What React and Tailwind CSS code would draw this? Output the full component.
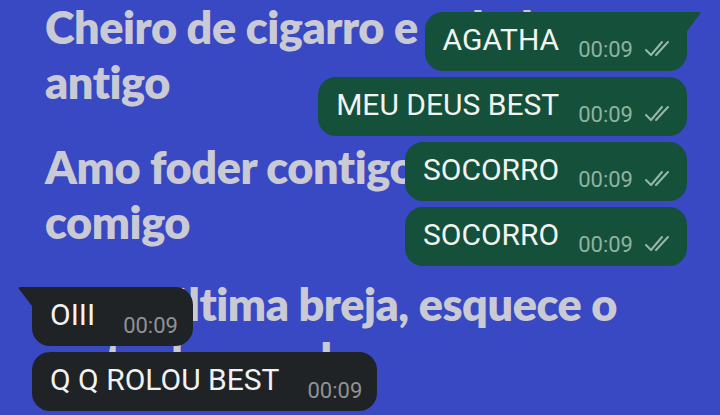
import React from 'react';

function Ticks() {
  return (
    <svg width="29" height="17" viewBox="0 0 29 17" fill="none" stroke="#97b8a6" strokeWidth="2" strokeLinecap="round" strokeLinejoin="round" className="ml-[10px] mt-[28px] shrink-0">
      <path d="M3 10l5 5L19 2" />
      <path d="M13 15L25 2" />
    </svg>
  );
}

function Sent({ text, tail }) {
  return (
    <div className={`relative flex h-[59px] items-start rounded-[18px] bg-[#14503a] pl-[18px] pr-[15px] ${tail ? 'rounded-tr-none' : ''}`}>
      {tail && (
        <svg width="14" height="19" viewBox="0 0 14 19" className="absolute left-full top-0">
          <path d="M0 0H11.5Q14.5 0 12.6 2.4L0 19Z" fill="#14503a" />
        </svg>
      )}
      <span className="mt-[13px] whitespace-nowrap text-[30px] leading-none text-[#f2f4f2]">{text}</span>
      <span className="ml-[19px] mt-[27px] text-[22px] leading-none text-[#8fb3a0]">00:09</span>
      <Ticks />
    </div>
  );
}

function Received({ text, tail }) {
  return (
    <div className={`relative flex h-[59px] items-start rounded-[18px] bg-[#1f2326] pl-[18px] pr-[15px] ${tail ? 'rounded-tl-none' : ''}`}>
      {tail && (
        <svg width="14" height="19" viewBox="0 0 14 19" className="absolute right-full top-0">
          <path d="M14 0H2.5Q-0.5 0 1.4 2.4L14 19Z" fill="#1f2326" />
        </svg>
      )}
      <span className="mt-[13px] whitespace-nowrap text-[30px] leading-none text-[#f2f2f2]">{text}</span>
      <span className="ml-[28px] mt-[28px] text-[22px] leading-none text-[#8e9297]">00:09</span>
    </div>
  );
}

export default function App() {
  return (
    <div className="relative h-[415px] w-[720px] overflow-hidden bg-[#3948c3]">
      <div className="px-[45px] pt-0 font-['Lato',sans-serif] text-[45px] font-extrabold leading-[55px] tracking-[-0.01em] text-[#c9cad4]">
        <div className="mb-[30px]">
          <div className="whitespace-nowrap">Cheiro de cigarro e cabelo</div>
          <div className="whitespace-nowrap">antigo</div>
        </div>
        <div className="mb-[27px]">
          <div className="whitespace-nowrap">Amo foder contigo, dormir</div>
          <div className="whitespace-nowrap">comigo</div>
        </div>
        <div>
          <div className="whitespace-nowrap">Toma última breja, esquece o</div>
          <div className="whitespace-nowrap">resto do mundo</div>
        </div>
      </div>

      <div className="absolute inset-0 flex flex-col font-['Roboto',sans-serif]">
        <div className="flex flex-col items-end gap-[6px] pr-[33px] pt-[12px]">
          <Sent text="AGATHA" tail />
          <Sent text="MEU DEUS BEST" />
          <Sent text="SOCORRO" />
          <Sent text="SOCORRO" />
        </div>
        <div className="mt-[21px] flex flex-col items-start gap-[6px] pl-[32px]">
          <Received text="OIII" tail />
          <Received text="Q Q ROLOU BEST" />
        </div>
      </div>
    </div>
  );
}
